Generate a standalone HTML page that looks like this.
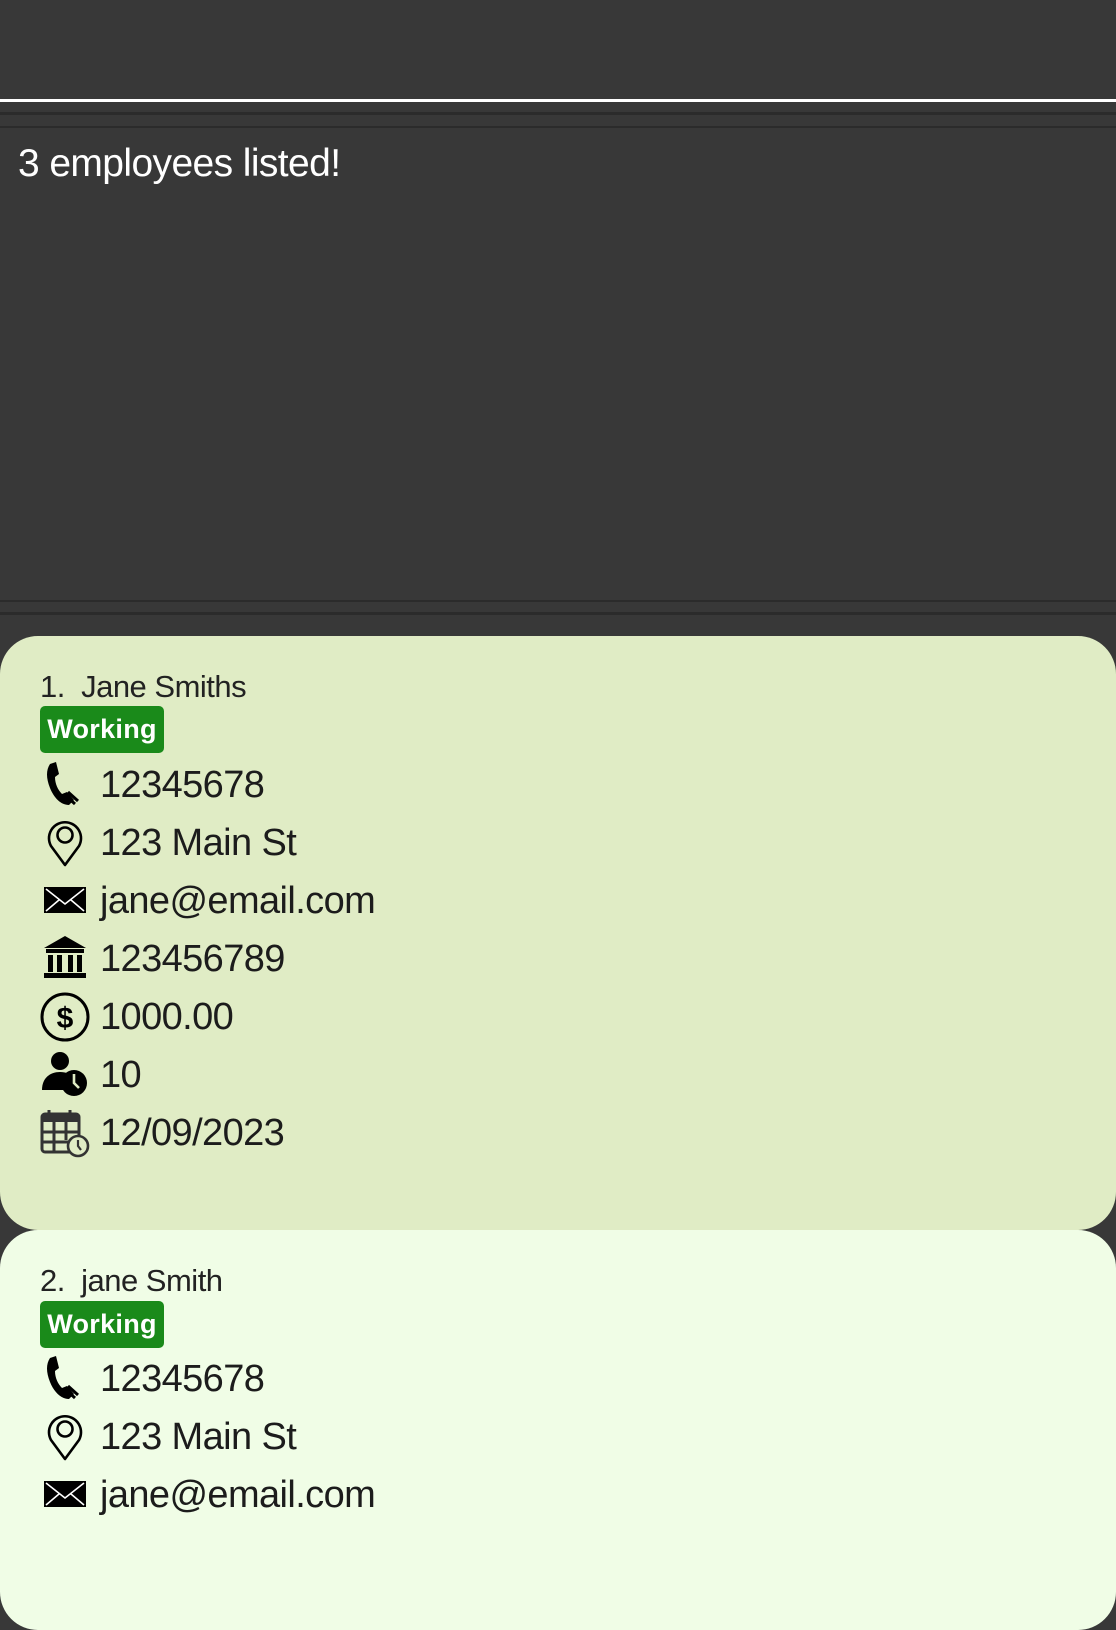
<!DOCTYPE html>
<html><head><meta charset="utf-8">
<style>
*{margin:0;padding:0;box-sizing:border-box}
html,body{width:1116px;height:1514px;overflow:hidden;background:#383838;font-family:"Liberation Sans",sans-serif}
.line{position:absolute;left:0;width:1116px}
.msg{position:absolute;left:18px;top:142px;color:#fff;font-size:39px;letter-spacing:-0.6px}
.card{position:absolute;left:0;width:1116px;border-radius:38px}
.name{position:absolute;left:40px;font-size:31px;color:#222;letter-spacing:-0.5px}
.badge{position:absolute;left:40px;width:124px;height:47px;background:#1a8a1a;border-radius:5px;color:#fff;font-weight:bold;font-size:27px;line-height:47px;text-align:center;letter-spacing:0.3px}
.row{position:absolute;left:40px;height:50px;width:600px}
.row svg{position:absolute;left:0;top:0}
.row span{position:absolute;left:60px;top:3px;font-size:38px;color:#1c1c1c;letter-spacing:-0.6px;line-height:44px}
</style></head><body>
<div class="line" style="top:99px;height:3px;background:#fff"></div>
<div class="line" style="top:112px;height:3px;background:#2b2b2b"></div>
<div class="line" style="top:126px;height:2px;background:#2b2b2b"></div>
<div class="msg">3 employees listed!</div>
<div class="line" style="top:600px;height:2px;background:#2b2b2b"></div>
<div class="line" style="top:612px;height:3px;background:#2b2b2b"></div>

<div class="card" style="top:636px;height:594px;background:#e0ecc5"></div>
<div class="card" style="top:1230px;height:400px;background:#f0fde6"></div>

<svg width="0" height="0" style="position:absolute">
<defs>
<g id="phone"><path d="M10 4 L16 2 L19 14 L15 17 C15 24 18 30 22 34 L27 32 L34 40 L29 45 C21 45 14 38 10 28 C6 18 6 10 10 4 Z" fill="#000"/><path d="M25 35 L35 44 M28 32 L38 41" stroke="#000" stroke-width="3"/></g>
<g id="pin"><path d="M25 47 L11 28 A16 16 0 1 1 39 28 Z" fill="none" stroke="#000" stroke-width="2.6" stroke-linejoin="round"/><circle cx="25" cy="17" r="7.5" fill="none" stroke="#000" stroke-width="2.6"/></g>
<g id="mail"><rect x="4" y="11" width="42" height="26" fill="#000"/><path d="M6 13 L25 28 L44 13 M6 35 L19 24 M44 35 L31 24" stroke="#fff" stroke-width="1.6" fill="none"/></g>
<g id="bank"><path d="M25 2 L4 14 L46 14 Z" fill="#000"/><rect x="6" y="15" width="38" height="4" fill="#000"/><rect x="8" y="21" width="5" height="17" fill="#000"/><rect x="17" y="21" width="5" height="17" fill="#000"/><rect x="28" y="21" width="5" height="17" fill="#000"/><rect x="37" y="21" width="5" height="17" fill="#000"/><rect x="4" y="39" width="42" height="5" fill="#000"/></g>
<g id="dollar"><circle cx="25" cy="25" r="23" fill="none" stroke="#000" stroke-width="3"/><text x="25" y="36" text-anchor="middle" font-family="Liberation Sans" font-size="30" font-weight="bold" fill="#000">$</text></g>
<g id="person"><circle cx="20" cy="11" r="9" fill="#000"/><path d="M2 40 C2 28 10 22 20 22 C26 22 30 24 32 27 L28 40 Z" fill="#000"/><circle cx="34" cy="33" r="13" fill="#000"/><path d="M34 24 L34 33 L39 38" stroke="#e0ecc5" stroke-width="2.6" fill="none"/></g>
<g id="cal"><rect x="2" y="6" width="37" height="38" rx="3" fill="none" stroke="#333" stroke-width="3"/><rect x="2" y="6" width="37" height="8" fill="#333"/><path d="M9 2 V10 M30 2 V10 M2 24 H39 M2 34 H30 M14 14 V44 M26 14 V32" stroke="#333" stroke-width="3"/><circle cx="38" cy="38" r="10" fill="#e0ecc5" stroke="#333" stroke-width="2.6"/><path d="M38 32 V38 L41 42" stroke="#333" stroke-width="2.2" fill="none"/></g>
</defs></svg>

<div class="name" style="top:669px">1.&nbsp; Jane Smiths</div>
<div class="badge" style="top:706px">Working</div>
<div class="row" style="top:760px"><svg width="50" height="50"><use href="#phone"/></svg><span>12345678</span></div>
<div class="row" style="top:818px"><svg width="50" height="50"><use href="#pin"/></svg><span>123 Main St</span></div>
<div class="row" style="top:876px"><svg width="50" height="50"><use href="#mail"/></svg><span>jane@email.com</span></div>
<div class="row" style="top:934px"><svg width="50" height="50"><use href="#bank"/></svg><span>123456789</span></div>
<div class="row" style="top:992px"><svg width="52" height="52"><use href="#dollar"/></svg><span>1000.00</span></div>
<div class="row" style="top:1050px"><svg width="50" height="50"><use href="#person"/></svg><span>10</span></div>
<div class="row" style="top:1108px"><svg width="52" height="52"><use href="#cal"/></svg><span>12/09/2023</span></div>

<div class="name" style="top:1263px">2.&nbsp; jane Smith</div>
<div class="badge" style="top:1301px">Working</div>
<div class="row" style="top:1354px"><svg width="50" height="50"><use href="#phone"/></svg><span>12345678</span></div>
<div class="row" style="top:1412px"><svg width="50" height="50"><use href="#pin"/></svg><span>123 Main St</span></div>
<div class="row" style="top:1470px"><svg width="50" height="50"><use href="#mail"/></svg><span>jane@email.com</span></div>
</body></html>
